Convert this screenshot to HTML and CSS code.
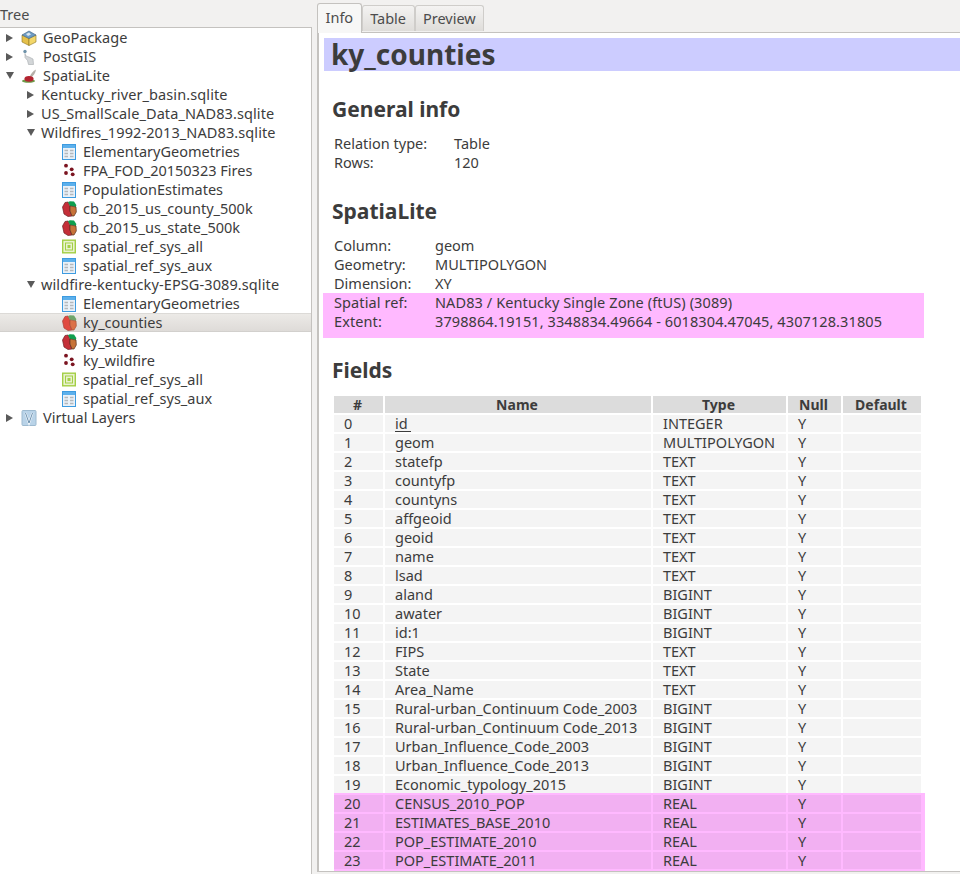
FILE: index.html
```html
<!DOCTYPE html>
<html lang="en">
<head>
  <meta charset="UTF-8">
  <meta name="viewport" content="width=device-width, initial-scale=1.0">
  <title>DB Manager</title>
  <link rel="stylesheet" href="styles.css">
</head>
<body>
  <!-- Shared tree icons -->
  <svg class="defs" width="0" height="0">
    <symbol id="i-table" viewBox="0 0 15 16">
      <rect x="0.5" y="0.5" width="13" height="15" fill="#e9f1f8" stroke="#3d9be0"/>
      <rect x="1" y="1" width="12" height="3" fill="#5cb0ec"/>
      <path d="M2.5 6.5h3.5M8 6.5h3.5M2.5 9.5h3.5M8 9.5h3.5M2.5 12.5h3.5M8 12.5h3.5" stroke="#b4b8bb" stroke-width="1.6"/>
    </symbol>
    <symbol id="i-poly" viewBox="0 0 15 16">
      <path d="M3 1.5 6 1 8 5 8 10 10 15 6 15.5 2 13 0.5 6Z" fill="#c42f38" stroke="#6e2226" stroke-width="0.7"/>
      <path d="M6 1 8 0.3 12 0.5 14.3 4 14 6 8 5Z" fill="#0f9f4f"/>
      <path d="M8 5 14 6 14.3 11 12 15 10 15 8 10Z" fill="#c77339" stroke="#5a3420" stroke-width="0.7"/>
    </symbol>
    <symbol id="i-poly-sel" viewBox="0 0 15 16">
      <path d="M3 1.5 6 1 8 5 8 10 10 15 6 15.5 2 13 0.5 6Z" fill="#e04a40" stroke="#a8443c" stroke-width="0.7"/>
      <path d="M6 1 8 0.3 12 0.5 14.3 4 14 6 8 5Z" fill="#6fa56b"/>
      <path d="M8 5 14 6 14.3 11 12 15 10 15 8 10Z" fill="#dc7148" stroke="#a8553a" stroke-width="0.7"/>
    </symbol>
    <symbol id="i-points" viewBox="0 0 15 16">
      <circle cx="4" cy="2.7" r="1.9" fill="#7b1420"/>
      <circle cx="4" cy="10" r="1.9" fill="#7b1420"/>
      <circle cx="9.7" cy="6.3" r="1.9" fill="#7b1420"/>
      <circle cx="10.7" cy="11.3" r="1.9" fill="#7b1420"/>
    </symbol>
    <symbol id="i-raster" viewBox="0 0 15 16">
      <rect x="0.7" y="1.2" width="12.6" height="12.6" fill="#e9f2d0" stroke="#a3cf45" stroke-width="1.4"/>
      <rect x="3.5" y="4" width="7" height="7" fill="#e9f2d0" stroke="#a3cf45"/>
      <rect x="5.5" y="6" width="3" height="3" fill="#a3cf45"/>
    </symbol>
  </svg>

  <aside class="tree-panel">
    <div class="panel-title">Tree</div>
    <ul class="tree">
      <li class="node">
        <span class="arrow closed"></span>
        <svg class="icon-top" viewBox="0 0 16 16">
          <path d="M1 5 8 8.5 8 15.5 1 12Z" fill="#e5c04a" stroke="#8c7424" stroke-width="0.6"/>
          <path d="M8 8.5 15 5 15 12 8 15.5Z" fill="#f3d76a" stroke="#8c7424" stroke-width="0.6"/>
          <path d="M1 5 8 1 15 5 8 8.5Z" fill="#6d9cc4" stroke="#3f5f80" stroke-width="0.6"/>
          <path d="M5 4 8 2.5 10 4.5 7 6Z" fill="#dbe6ee"/>
        </svg>
        <span>GeoPackage</span>
      </li>
      <li class="node">
        <span class="arrow closed"></span>
        <svg class="icon-top" viewBox="0 0 16 16">
          <circle cx="4" cy="2.5" r="1.7" fill="#6f93aa"/>
          <path d="M4 4.5C4 7 6 7.5 8 8L12 10 12.5 15.5 7.5 15.5 6.5 11.5 4 8.5Z" fill="#d3d6d8" stroke="#a4a9ac" stroke-width="0.6"/>
        </svg>
        <span>PostGIS</span>
      </li>
      <li class="node">
        <span class="arrow open"></span>
        <svg class="icon-top" viewBox="0 0 16 16">
          <path d="M9 8C10 5.5 12 3 15 1.5 14.5 5 12.5 8 10 9Z" fill="#b5afa8"/>
          <ellipse cx="7.5" cy="13" rx="6.5" ry="1.7" fill="#6f9a4a"/>
          <ellipse cx="8" cy="10.8" rx="4.6" ry="2.9" fill="#b32430"/>
        </svg>
        <span>SpatiaLite</span>
      </li>
      <li class="node level1"><span class="arrow closed"></span><span>Kentucky_river_basin.sqlite</span></li>
      <li class="node level1"><span class="arrow closed"></span><span>US_SmallScale_Data_NAD83.sqlite</span></li>
      <li class="node level1"><span class="arrow open"></span><span>Wildfires_1992-2013_NAD83.sqlite</span></li>
      <li class="node level2"><svg class="icon"><use href="#i-table"/></svg><span>ElementaryGeometries</span></li>
      <li class="node level2"><svg class="icon"><use href="#i-points"/></svg><span>FPA_FOD_20150323 Fires</span></li>
      <li class="node level2"><svg class="icon"><use href="#i-table"/></svg><span>PopulationEstimates</span></li>
      <li class="node level2"><svg class="icon"><use href="#i-poly"/></svg><span>cb_2015_us_county_500k</span></li>
      <li class="node level2"><svg class="icon"><use href="#i-poly"/></svg><span>cb_2015_us_state_500k</span></li>
      <li class="node level2"><svg class="icon"><use href="#i-raster"/></svg><span>spatial_ref_sys_all</span></li>
      <li class="node level2"><svg class="icon"><use href="#i-table"/></svg><span>spatial_ref_sys_aux</span></li>
      <li class="node level1"><span class="arrow open"></span><span>wildfire-kentucky-EPSG-3089.sqlite</span></li>
      <li class="node level2"><svg class="icon"><use href="#i-table"/></svg><span>ElementaryGeometries</span></li>
      <li class="node level2 selected"><svg class="icon"><use href="#i-poly-sel"/></svg><span>ky_counties</span></li>
      <li class="node level2"><svg class="icon"><use href="#i-poly"/></svg><span>ky_state</span></li>
      <li class="node level2"><svg class="icon"><use href="#i-points"/></svg><span>ky_wildfire</span></li>
      <li class="node level2"><svg class="icon"><use href="#i-raster"/></svg><span>spatial_ref_sys_all</span></li>
      <li class="node level2"><svg class="icon"><use href="#i-table"/></svg><span>spatial_ref_sys_aux</span></li>
      <li class="node">
        <span class="arrow closed"></span>
        <svg class="icon-top" viewBox="0 0 16 16">
          <rect x="1" y="0.5" width="14" height="15" rx="1" fill="#b9d3e8" stroke="#9dbad0"/>
          <path d="M4.5 3 8 13 11.5 3" fill="none" stroke="#f2f7fb" stroke-width="2.2"/>
          <path d="M4.5 3 8 13 11.5 3" fill="none" stroke="#5f86a6" stroke-width="0.9"/>
        </svg>
        <span>Virtual Layers</span>
      </li>
    </ul>
  </aside>

  <main class="main">
    <nav class="tabs">
      <span class="tab active">Info</span>
      <span class="tab">Table</span>
      <span class="tab">Preview</span>
    </nav>
    <div class="pane">
      <h1 class="title">ky_counties</h1>

      <h2>General info</h2>
      <table class="props props-wide">
        <tr><td>Relation type:</td><td>Table</td></tr>
        <tr><td>Rows:</td><td>120</td></tr>
      </table>

      <h2 class="spatial-head">SpatiaLite</h2>
      <table class="props">
        <tr><td>Column:</td><td>geom</td></tr>
        <tr><td>Geometry:</td><td>MULTIPOLYGON</td></tr>
        <tr><td>Dimension:</td><td>XY</td></tr>
      </table>
      <div class="warn-block">
        <table class="props">
          <tr><td>Spatial ref:</td><td>NAD83 / Kentucky Single Zone (ftUS) (3089)</td></tr>
          <tr><td>Extent:</td><td>3798864.19151, 3348834.49664 - 6018304.47045, 4307128.31805</td></tr>
        </table>
      </div>

      <h2 class="fields-head">Fields</h2>
      <table class="fields">
        <thead>
          <tr><th class="c-num">#</th><th class="c-name">Name</th><th class="c-type">Type</th><th class="c-null">Null</th><th class="c-def">Default</th></tr>
        </thead>
        <tbody>
          <tr><td>0</td><td><span class="pk">id</span></td><td>INTEGER</td><td>Y</td><td></td></tr>
          <tr><td>1</td><td>geom</td><td>MULTIPOLYGON</td><td>Y</td><td></td></tr>
          <tr><td>2</td><td>statefp</td><td>TEXT</td><td>Y</td><td></td></tr>
          <tr><td>3</td><td>countyfp</td><td>TEXT</td><td>Y</td><td></td></tr>
          <tr><td>4</td><td>countyns</td><td>TEXT</td><td>Y</td><td></td></tr>
          <tr><td>5</td><td>affgeoid</td><td>TEXT</td><td>Y</td><td></td></tr>
          <tr><td>6</td><td>geoid</td><td>TEXT</td><td>Y</td><td></td></tr>
          <tr><td>7</td><td>name</td><td>TEXT</td><td>Y</td><td></td></tr>
          <tr><td>8</td><td>lsad</td><td>TEXT</td><td>Y</td><td></td></tr>
          <tr><td>9</td><td>aland</td><td>BIGINT</td><td>Y</td><td></td></tr>
          <tr><td>10</td><td>awater</td><td>BIGINT</td><td>Y</td><td></td></tr>
          <tr><td>11</td><td>id:1</td><td>BIGINT</td><td>Y</td><td></td></tr>
          <tr><td>12</td><td>FIPS</td><td>TEXT</td><td>Y</td><td></td></tr>
          <tr><td>13</td><td>State</td><td>TEXT</td><td>Y</td><td></td></tr>
          <tr><td>14</td><td>Area_Name</td><td>TEXT</td><td>Y</td><td></td></tr>
          <tr><td>15</td><td>Rural-urban_Continuum Code_2003</td><td>BIGINT</td><td>Y</td><td></td></tr>
          <tr><td>16</td><td>Rural-urban_Continuum Code_2013</td><td>BIGINT</td><td>Y</td><td></td></tr>
          <tr><td>17</td><td>Urban_Influence_Code_2003</td><td>BIGINT</td><td>Y</td><td></td></tr>
          <tr><td>18</td><td>Urban_Influence_Code_2013</td><td>BIGINT</td><td>Y</td><td></td></tr>
          <tr><td>19</td><td>Economic_typology_2015</td><td>BIGINT</td><td>Y</td><td></td></tr>
          <tr class="warn"><td>20</td><td>CENSUS_2010_POP</td><td>REAL</td><td>Y</td><td></td></tr>
          <tr class="warn"><td>21</td><td>ESTIMATES_BASE_2010</td><td>REAL</td><td>Y</td><td></td></tr>
          <tr class="warn"><td>22</td><td>POP_ESTIMATE_2010</td><td>REAL</td><td>Y</td><td></td></tr>
          <tr class="warn"><td>23</td><td>POP_ESTIMATE_2011</td><td>REAL</td><td>Y</td><td></td></tr>
        </tbody>
      </table>
    </div>
  </main>
</body>
</html>
```

FILE: styles.css
```css
html, body {
  height: 100%;
}

body {
  margin: 0;
  height: 874px;
  overflow: hidden;
  display: flex;
  background: #f2f1f0;
  color: #3c3c3c;
  font-family: "Noto Sans", "Open Sans", sans-serif;
  font-size: 14.5px;
}

.defs {
  position: absolute;
}

/* Left dock with the connection tree */
.tree-panel {
  width: 312px;
  flex: none;
  display: flex;
  flex-direction: column;
}

.panel-title {
  height: 27px;
  line-height: 29px;
  color: #4c4c4c;
}

.tree {
  flex: 1;
  margin: 0;
  padding: 0;
  list-style: none;
  background: #fff;
  border-top: 1px solid #c4c2bf;
  border-right: 1px solid #c4c2bf;
}

.node {
  height: 19px;
  display: flex;
  align-items: center;
  white-space: nowrap;
  padding-left: 6px;
}

/* Labels sit a pixel above the icon centre */
.node > span:last-child {
  padding-bottom: 2px;
}

.level1 {
  padding-left: 27px;
  letter-spacing: 0.1px;
}

.level2 {
  padding-left: 62px;
}

.selected {
  background: linear-gradient(#eceae7, #dedbd8);
  border-top: 1px solid #dcdad7;
  border-bottom: 1px solid #d2d0cd;
  height: 17px;
}

.arrow {
  flex: none;
  width: 0;
  height: 0;
  border-style: solid;
  border-color: transparent;
}

.arrow.closed {
  border-width: 4px 0 4px 7px;
  border-left-color: #5a5a5a;
  margin-right: 8px;
}

.arrow.open {
  border-width: 7px 4px 0 4px;
  border-top-color: #5a5a5a;
  margin-right: 7px;
}

.level1 .arrow {
  margin-right: 7px;
}

.level1 .arrow.open {
  margin-right: 6px;
}

.icon-top {
  width: 16px;
  height: 16px;
  flex: none;
  margin-right: 6px;
}

.icon {
  width: 15px;
  height: 16px;
  flex: none;
  margin-right: 6px;
}

/* Right side: tab bar and info page */
.main {
  flex: 1;
  min-width: 0;
  display: flex;
  flex-direction: column;
  padding: 2px 0 2px 5px;
}

.tabs {
  display: flex;
  height: 30px;
  align-items: flex-end;
  position: relative;
  z-index: 1;
}

.tab {
  height: 25px;
  line-height: 25px;
  padding: 0 7.5px;
  margin-bottom: 1px;
  color: #4c4c4c;
  background: linear-gradient(#f4f3f2, #dfddda);
  border: 1px solid #cfcdca;
  border-bottom: 0;
  border-radius: 3px 3px 0 0;
}

.tab.active {
  height: 29px;
  line-height: 27px;
  margin-bottom: -1px;
  background: #f7f7f6;
  border-color: #c4c2bf;
}

.pane {
  flex: 1;
  min-height: 0;
  overflow: hidden;
  background: #fff;
  border: 1px solid #c4c2bf;
  border-right: 0;
  border-left-width: 2px;
  padding: 5px 0 0 4px;
}

.title {
  margin: 0 0 0 1px;
  height: 33px;
  padding-left: 7px;
  line-height: 33px;
  font-size: 28px;
  font-weight: 700;
  background: #ccccff;
}

h2 {
  margin: 25px 0 0 9px;
  height: 27px;
  line-height: 27px;
  font-size: 21px;
  font-weight: 700;
}

.spatial-head {
  margin-top: 26px;
}

.fields-head {
  margin-top: 19px;
}

.props {
  margin: 11px 0 0 11px;
  border-collapse: collapse;
}

.props td {
  height: 19px;
  padding: 0;
  line-height: 19px;
  white-space: nowrap;
}

.props td:first-child {
  width: 101px;
}

.props-wide td:first-child {
  width: 120px;
}

/* Warning rows are tinted pink */
.warn-block {
  width: 601px;
  height: 45px;
  background: #ffb9ff;
}

.warn-block .props {
  margin-top: 0;
  letter-spacing: 0.1px;
}

.fields {
  margin: 10px 0 0 9px;
  border-spacing: 2px;
  table-layout: fixed;
  width: 591px;
}

.fields th {
  box-sizing: border-box;
  height: 17px;
  padding: 0 2px 0 0;
  line-height: 17px;
  background: #dcdcdc;
  font-size: 14px;
  font-weight: 700;
}

.fields td {
  height: 17px;
  padding: 0 0 0 10px;
  line-height: 17px;
  background: #f4f4f4;
  white-space: nowrap;
}

.c-num { width: 49px; }
.c-name { width: 266px; }
.c-type { width: 133px; }
.c-null { width: 53px; }
.c-def { width: 78px; }

.pk {
  display: inline-block;
  vertical-align: top;
  box-sizing: border-box;
  width: 16px;
  height: 17px;
  border-bottom: 1px solid #3c3c3c;
  line-height: 17px;
}

.warn td {
  background: #f2b0f2;
  box-shadow: 0 0 0 2px #ffb9ff;
}

.warn td:first-child {
  clip-path: inset(-2px -2px -2px 0);
}

.warn td:last-child {
  box-shadow: 2px 0 0 2px #ffb9ff;
}
```
